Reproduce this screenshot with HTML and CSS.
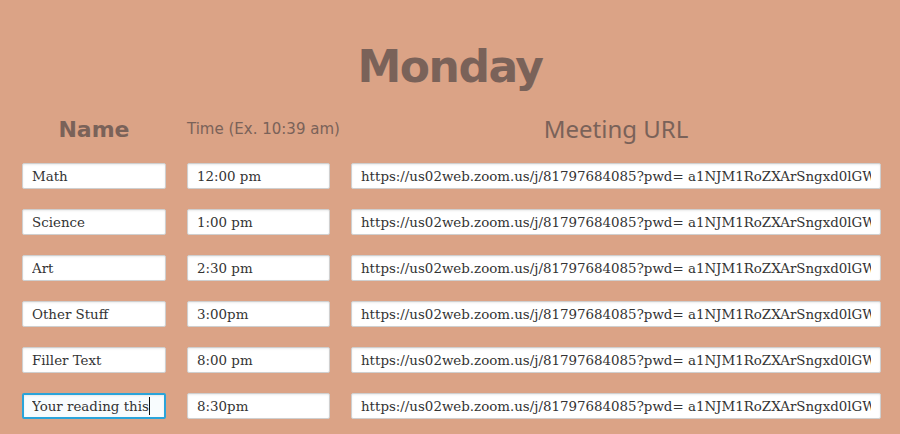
FILE: index.html
```html
<!DOCTYPE html>
<html>
<head>
<meta charset="utf-8">
<link rel="stylesheet" href="styles.css">
</head>
<body>
<h1 class="day">Monday</h1>
<div class="schedule">
  <div class="head head-name">Name</div>
  <div class="head head-time">Time (Ex. 10:39 am)</div>
  <div class="head head-url">Meeting URL</div>

  <input class="field" type="text" value="Math">
  <input class="field" type="text" value="12:00 pm">
  <input class="field" type="text" value="https://us02web.zoom.us/j/81797684085?pwd= a1NJM1RoZXArSngxd0lGWXk">

  <input class="field" type="text" value="Science">
  <input class="field" type="text" value="1:00 pm">
  <input class="field" type="text" value="https://us02web.zoom.us/j/81797684085?pwd= a1NJM1RoZXArSngxd0lGWXk">

  <input class="field" type="text" value="Art">
  <input class="field" type="text" value="2:30 pm">
  <input class="field" type="text" value="https://us02web.zoom.us/j/81797684085?pwd= a1NJM1RoZXArSngxd0lGWXk">

  <input class="field" type="text" value="Other Stuff">
  <input class="field" type="text" value="3:00pm">
  <input class="field" type="text" value="https://us02web.zoom.us/j/81797684085?pwd= a1NJM1RoZXArSngxd0lGWXk">

  <input class="field" type="text" value="Filler Text">
  <input class="field" type="text" value="8:00 pm">
  <input class="field" type="text" value="https://us02web.zoom.us/j/81797684085?pwd= a1NJM1RoZXArSngxd0lGWXk">

  <div class="focus-wrap">
    <input class="field field-focus" type="text" value="Your reading this">
    <span class="caret"></span>
  </div>
  <input class="field" type="text" value="8:30pm">
  <input class="field" type="text" value="https://us02web.zoom.us/j/81797684085?pwd= a1NJM1RoZXArSngxd0lGWXk">
</div>
</body>
</html>
```
FILE: styles.css
```css
html, body {
  margin: 0;
  padding: 0;
  background: #dba386;
  height: 100%;
  overflow: hidden;
}
body {
  color: #7a6259;
  font-family: "DejaVu Sans", sans-serif;
}
.day {
  margin: 0;
  padding-top: 41px;
  height: 52px;
  text-align: center;
  font-size: 44px;
  font-weight: bold;
  line-height: 52px;
  letter-spacing: -1.5px;
}
.schedule {
  display: grid;
  grid-template-columns: 144px 143px 530px;
  column-gap: 21px;
  row-gap: 20px;
  padding-left: 22px;
  padding-top: 21px;
}
.head {
  text-align: center;
  height: 30px;
  line-height: 30px;
  margin-bottom: -2px;
  white-space: nowrap;
}
.head-name {
  font-size: 22px;
  font-weight: bold;
  padding-top: 1px;
}
.head-time {
  font-size: 15px;
}
.head-url {
  font-size: 24px;
  font-family: "Noto Sans", sans-serif;
}
.field {
  box-sizing: border-box;
  display: block;
  width: 100%;
  height: 26px;
  margin: 0;
  padding: 0 9px;
  border: 1px solid #cfcfcf;
  border-radius: 2px;
  background: #fff;
  box-shadow: inset 0 1px 2px rgba(0,0,0,0.08);
  font-family: "DejaVu Serif", serif;
  font-size: 13.4px;
  color: #333;
  outline: none;
}
.focus-wrap {
  position: relative;
}
.field-focus {
  border: 2px solid #2aa4da;
  padding: 0 8px;
  background: #f8fcfe;
}
.caret {
  position: absolute;
  left: 127px;
  top: 4px;
  width: 1px;
  height: 18px;
  background: #111;
}
```
